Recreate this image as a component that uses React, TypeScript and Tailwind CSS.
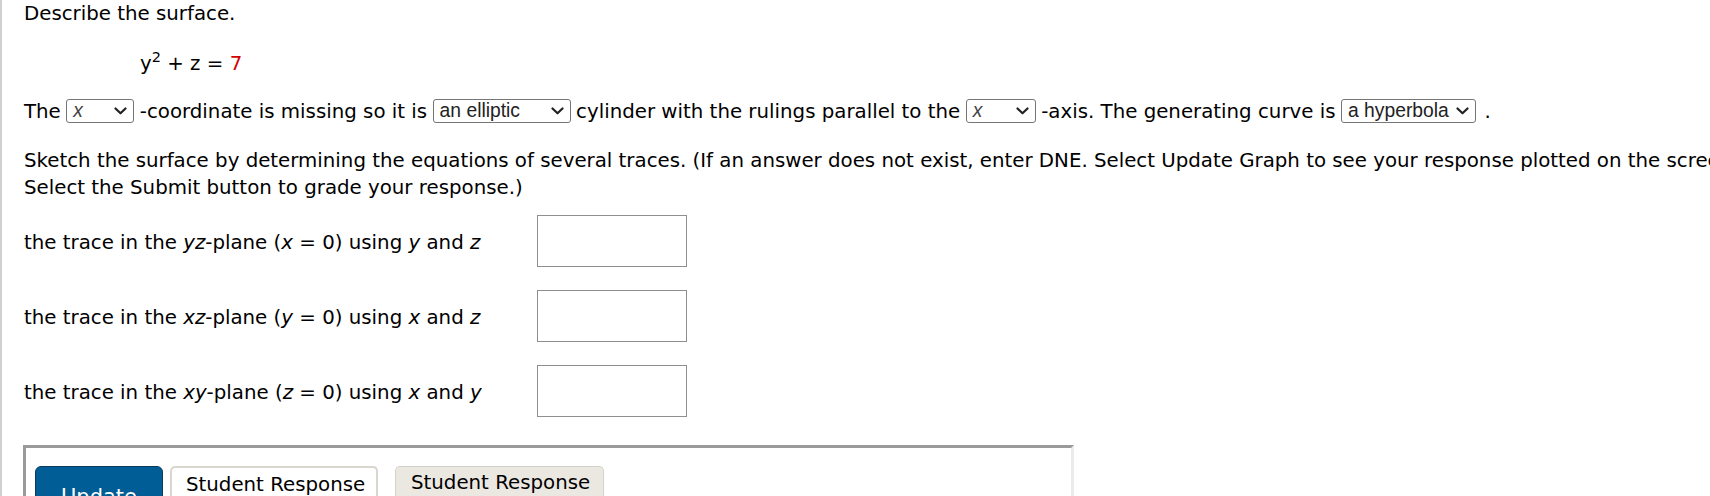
import React from "react";

const Chevron = () => (
  <svg width="13" height="8" viewBox="0 0 13 8" className="shrink-0">
    <path d="M1.5 1.5 L6.5 6.3 L11.5 1.5" fill="none" stroke="#222" strokeWidth="2.2" strokeLinecap="round" strokeLinejoin="round" />
  </svg>
);

function FakeSelect({ value, width, italic, pr = "pr-[6px]" }: { value: string; width: string; italic?: boolean; pr?: string }) {
  return (
    <span
      className={`flex h-[24px] items-center justify-between rounded-[3px] border border-[#767676] bg-white pl-[6px] ${pr} ${width} font-['Liberation_Sans',Arial,sans-serif] text-[19.3px] leading-none text-[#222]`}
    >
      <span className={italic ? "italic text-[#444]" : ""}>{value}</span>
      <Chevron />
    </span>
  );
}

function TraceRow({ children }: { children: React.ReactNode }) {
  return (
    <div className="flex h-[52px] items-center">
      <div className="w-[513px] pt-[3px]">{children}</div>
      <div className="h-[52px] w-[150px] border border-[#8f8f8f] bg-white" />
    </div>
  );
}

export default function App() {
  return (
    <div className="h-[496px] w-[1710px] overflow-hidden bg-white font-['Verdana','DejaVu_Sans',sans-serif] text-[19.8px] leading-[27px] text-black">
      <div className="h-full border-l-2 border-[#d0d0d0] pl-[22px]">
        <p>Describe the surface.</p>

        <p className="mt-[22.5px] pl-[116px]">
          y<sup className="text-[14.5px]">2</sup> + z = <span className="text-[#d40000]">7</span>
        </p>

        <div className="mt-[21px] flex h-[27px] items-center gap-[5.5px] whitespace-nowrap">
          <span>The</span>
          <FakeSelect value="x" width="w-[68px]" italic />
          <span>-coordinate is missing so it is</span>
          <FakeSelect value="an elliptic" width="w-[138px]" />
          <span>cylinder with the rulings parallel to the</span>
          <FakeSelect value="x" width="w-[70px]" italic />
          <span>-axis. The generating curve is</span>
          <FakeSelect value="a hyperbola" width="w-[135px]" pr="pr-[6px]" />
          <span className="ml-[3px]">.</span>
        </div>

        <p className="mt-[22px] whitespace-nowrap">
          Sketch the surface by determining the equations of several traces. (If an answer does not exist, enter DNE. Select Update Graph to see your response plotted on the screen.
          <br />
          Select the Submit button to grade your response.)
        </p>

        <div className="mt-[14.5px] flex flex-col gap-[23px]">
          <TraceRow>
            the trace in the <i>yz</i>-plane (<i>x</i> = 0) using <i>y</i> and <i>z</i>
          </TraceRow>
          <TraceRow>
            the trace in the <i>xz</i>-plane (<i>y</i> = 0) using <i>x</i> and <i>z</i>
          </TraceRow>
          <TraceRow>
            the trace in the <i>xy</i>-plane (<i>z</i> = 0) using <i>x</i> and <i>y</i>
          </TraceRow>
        </div>

        <div className="-ml-px mt-[28px] h-[80px] w-[1051px] border-l-[3px] border-r-[3px] border-t-[3px] border-l-[#9a9a9a] border-r-[#ebebeb] border-t-[#9a9a9a] pl-[9px] pt-[18px]">
          <div className="flex items-start">
            <button className="h-[50px] w-[128px] rounded-[6px] border border-[#0b3a5c] bg-[#005d95] pt-[12px] text-center text-[21px] leading-[27px] text-white">
              Update
            </button>
            <div className="ml-[7px] h-[40px] w-[208px] rounded-t-[5px] border-2 border-b-0 border-[#d9d6cf] bg-white pl-[14px] pt-[3px]">
              Student Response
            </div>
            <div className="ml-[17px] h-[40px] w-[209px] rounded-t-[5px] border border-b-0 border-[#d4d1ca] bg-[#ebe8e2] pl-[15px] pt-[2px]">
              Student Response
            </div>
          </div>
        </div>
      </div>
    </div>
  );
}
